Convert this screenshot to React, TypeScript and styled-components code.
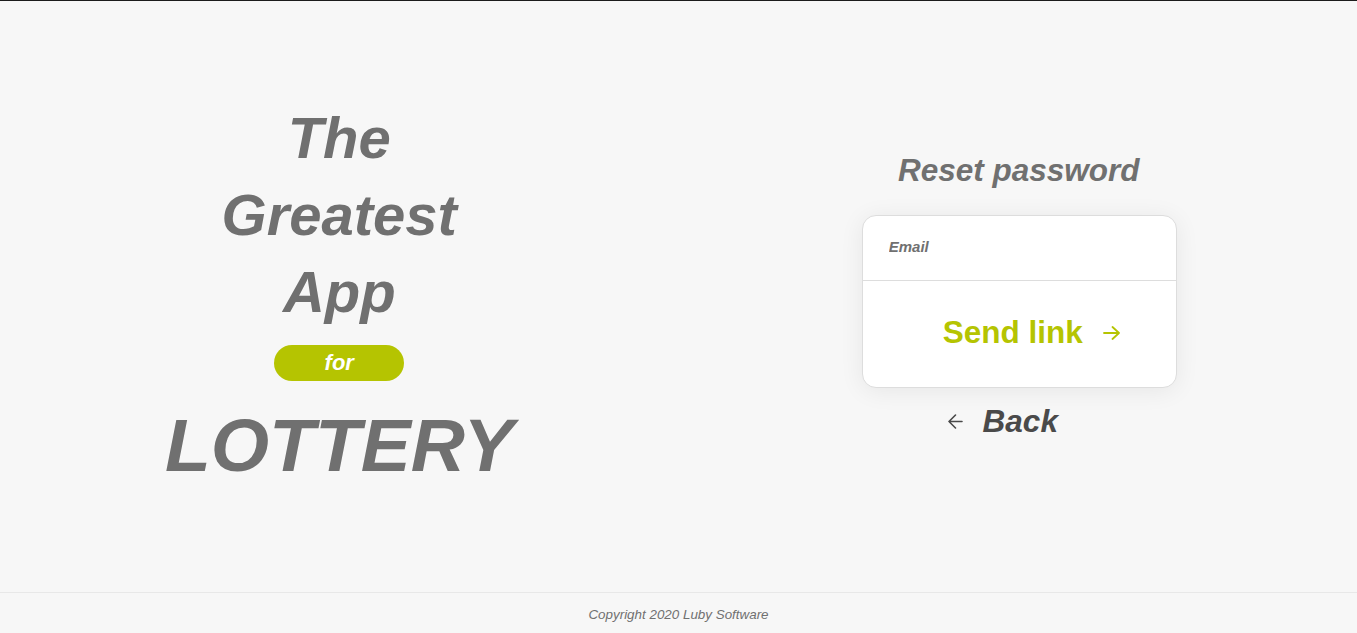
import React from "react";
import styled, { createGlobalStyle } from "styled-components";

const GlobalStyle = createGlobalStyle`
  * { box-sizing: border-box; }
  html, body { margin: 0; padding: 0; }
  body {
    background: #f7f7f7;
    font-family: "Liberation Sans", Arial, Helvetica, sans-serif;
    border-top: 1px solid #1c1c1c;
  }
`;

const Page = styled.div`
  min-height: 632px;
  display: flex;
  flex-direction: column;
`;

const Main = styled.main`
  flex: 1;
  display: grid;
  grid-template-columns: 1fr 1fr;
  align-items: center;
`;

const Column = styled.section`
  display: flex;
  flex-direction: column;
  align-items: center;
`;

const Headline = styled.h1`
  margin: 0;
  font-size: 58px;
  line-height: 77px;
  font-weight: 700;
  font-style: italic;
  color: #707070;
  text-align: center;
`;

const Pill = styled.span`
  margin-top: 15px;
  width: 130px;
  height: 36px;
  border-radius: 18px;
  background: #b5c401;
  color: #ffffff;
  font-size: 22px;
  font-weight: 700;
  font-style: italic;
  display: flex;
  align-items: center;
  justify-content: center;
`;

const Lottery = styled.div`
  margin-top: 21px;
  margin-bottom: 6px;
  font-size: 75px;
  line-height: 86px;
  font-weight: 700;
  font-style: italic;
  color: #707070;
`;

const FormTitle = styled.h2`
  margin: 0 0 27px 0;
  font-size: 31.5px;
  line-height: 35px;
  font-weight: 700;
  font-style: italic;
  color: #707070;
  padding-left: 2px;
`;

const Card = styled.form`
  width: 315px;
  margin-left: 3px;
  background: #ffffff;
  border: 1px solid #dddddd;
  border-radius: 14px;
  box-shadow: 0 3px 25px rgba(0, 0, 0, 0.07);
  display: flex;
  flex-direction: column;
  overflow: hidden;
`;

const EmailInput = styled.input`
  height: 65px;
  border: none;
  border-bottom: 1px solid #dddddd;
  outline: none;
  padding: 0 26px 2px;
  font-family: "Liberation Sans", Arial, sans-serif;
  font-size: 15px;
  font-weight: 700;
  font-style: italic;
  color: #707070;
  background: transparent;
  &::placeholder {
    color: #707070;
    opacity: 1;
  }
`;

const SendButton = styled.button`
  height: 106px;
  border: none;
  background: transparent;
  display: flex;
  align-items: center;
  justify-content: center;
  gap: 20px;
  padding: 0 0 2px 24px;
  font-family: "Liberation Sans", Arial, sans-serif;
  font-size: 31.5px;
  font-weight: 700;
  color: #b5c401;
  cursor: pointer;
`;

const BackLink = styled.a`
  margin: 16px 0 2px;
  padding-right: 30px;
  display: flex;
  align-items: center;
  gap: 20px;
  font-size: 31.5px;
  line-height: 35px;
  font-weight: 700;
  font-style: italic;
  color: #4a4a4a;
  text-decoration: none;
  cursor: pointer;
`;

const Footer = styled.footer`
  height: 41px;
  border-top: 1px solid #e8e8e8;
  display: flex;
  align-items: center;
  justify-content: center;
  font-size: 13.4px;
  font-style: italic;
  color: #707070;
  padding-top: 2px;
`;

const ArrowRight = () => (
  <svg width="17" height="14" viewBox="0 0 17 14" fill="none" stroke="#b5c401" strokeWidth="1.8" strokeLinecap="round" strokeLinejoin="round">
    <path d="M1 7 H16 M9.5 1 L16 7 L9.5 13" />
  </svg>
);

const ArrowLeft = () => (
  <svg width="15" height="15" viewBox="0 0 15 15" fill="none" stroke="#4a4a4a" strokeWidth="1.6" strokeLinecap="round" strokeLinejoin="round">
    <path d="M14 7.5 H1 M7.5 1 L1 7.5 L7.5 14" />
  </svg>
);

export default function App() {
  return (
    <>
      <GlobalStyle />
      <Page>
        <Main>
          <Column>
            <Headline>
              The
              <br />
              Greatest
              <br />
              App
            </Headline>
            <Pill>for</Pill>
            <Lottery>LOTTERY</Lottery>
          </Column>
          <Column>
            <FormTitle>Reset password</FormTitle>
            <Card onSubmit={(e) => e.preventDefault()}>
              <EmailInput type="email" placeholder="Email" />
              <SendButton type="submit">
                Send link
                <ArrowRight />
              </SendButton>
            </Card>
            <BackLink>
              <ArrowLeft />
              Back
            </BackLink>
          </Column>
        </Main>
        <Footer>Copyright 2020 Luby Software</Footer>
      </Page>
    </>
  );
}
